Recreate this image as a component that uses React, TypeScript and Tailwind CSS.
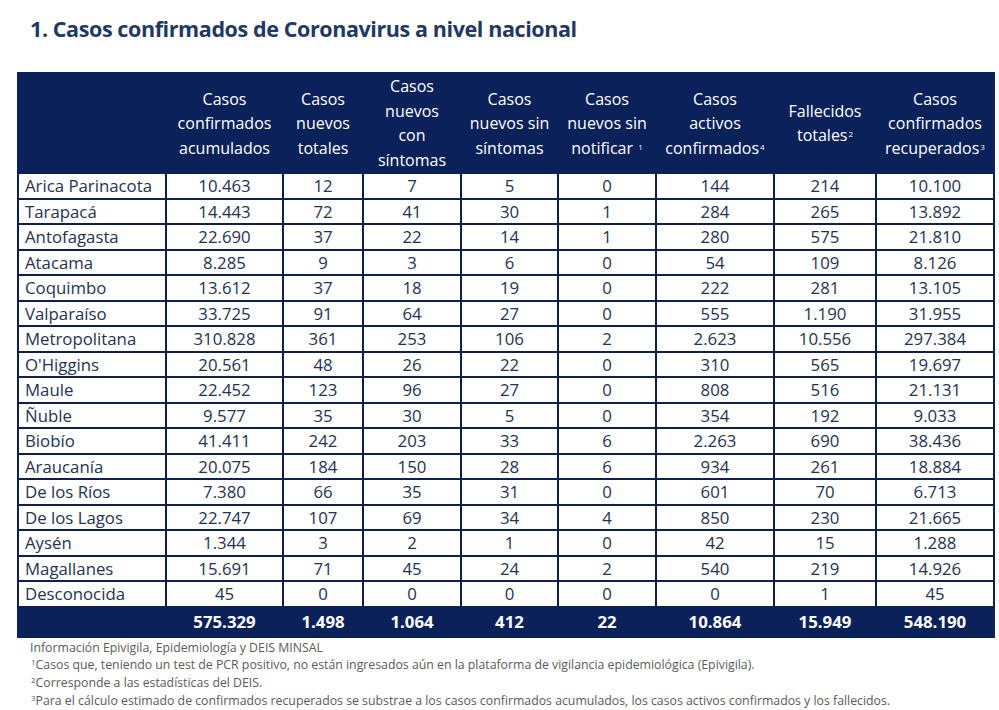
const headers: string[][] = [
  [],
  ['Casos', 'confirmados', 'acumulados'],
  ['Casos', 'nuevos', 'totales'],
  ['Casos', 'nuevos', 'con', 'síntomas'],
  ['Casos', 'nuevos sin', 'síntomas'],
  ['Casos', 'nuevos sin', 'notificar ¹'],
  ['Casos', 'activos', 'confirmados⁴'],
  ['Fallecidos', 'totales²'],
  ['Casos', 'confirmados', 'recuperados³'],
]

const widths = ['w-[148px]', 'w-[117px]', 'w-[80px]', 'w-[98px]', 'w-[97px]', 'w-[98px]', 'w-[118px]', 'w-[102px]', 'w-[118px]']

const rows: string[][] = [
  ['Arica Parinacota', '10.463', '12', '7', '5', '0', '144', '214', '10.100'],
  ['Tarapacá', '14.443', '72', '41', '30', '1', '284', '265', '13.892'],
  ['Antofagasta', '22.690', '37', '22', '14', '1', '280', '575', '21.810'],
  ['Atacama', '8.285', '9', '3', '6', '0', '54', '109', '8.126'],
  ['Coquimbo', '13.612', '37', '18', '19', '0', '222', '281', '13.105'],
  ['Valparaíso', '33.725', '91', '64', '27', '0', '555', '1.190', '31.955'],
  ['Metropolitana', '310.828', '361', '253', '106', '2', '2.623', '10.556', '297.384'],
  ["O'Higgins", '20.561', '48', '26', '22', '0', '310', '565', '19.697'],
  ['Maule', '22.452', '123', '96', '27', '0', '808', '516', '21.131'],
  ['Ñuble', '9.577', '35', '30', '5', '0', '354', '192', '9.033'],
  ['Biobío', '41.411', '242', '203', '33', '6', '2.263', '690', '38.436'],
  ['Araucanía', '20.075', '184', '150', '28', '6', '934', '261', '18.884'],
  ['De los Ríos', '7.380', '66', '35', '31', '0', '601', '70', '6.713'],
  ['De los Lagos', '22.747', '107', '69', '34', '4', '850', '230', '21.665'],
  ['Aysén', '1.344', '3', '2', '1', '0', '42', '15', '1.288'],
  ['Magallanes', '15.691', '71', '45', '24', '2', '540', '219', '14.926'],
  ['Desconocida', '45', '0', '0', '0', '0', '0', '1', '45'],
]

const totals = ['', '575.329', '1.498', '1.064', '412', '22', '10.864', '15.949', '548.190']

const supMap: Record<string, string> = { '¹': '1', '²': '2', '³': '3', '⁴': '4' }

function Sup({ n }: { n: string }) {
  return <span className="relative -top-[4px] ml-[1px] text-[8px] leading-none">{n}</span>
}

function HeaderLine({ text }: { text: string }) {
  const last = text.slice(-1)
  if (!supMap[last]) return <span className="block">{text}</span>
  return <span className="block">{text.slice(0, -1)}<Sup n={supMap[last]} /></span>
}

export default function App() {
  return <div className="min-h-[710px] w-[999px] bg-white font-['Open_Sans',sans-serif]">
    <h1 className="pl-[30px] pt-[13px] text-[21.5px] font-bold tracking-[-0.4px] text-[#1f3864]">1. Casos confirmados de Coronavirus a nivel nacional</h1>
    <table className="ml-[17px] mt-[27px] border-collapse text-[16.8px] text-[#253250]">
      <thead>
        <tr className="h-[98px] bg-[#0a215a] text-white">
          {headers.map((lines, index) =>
            <th key={index} className={`${widths[index]} border-2 border-[#0a215a] px-[2px] text-center text-[16px] font-normal leading-[24.5px]`}>
              {lines.map(line => <HeaderLine key={line} text={line} />)}
            </th>
          )}
        </tr>
      </thead>
      <tbody>
        {rows.map(row =>
          <tr key={row[0]} className="h-[25.5px]">
            {row.map((cell, index) =>
              <td key={index} className={`border-2 border-[#0f2148] p-0 leading-[20px] ${index === 0 ? 'pl-[6px] text-left' : 'text-center'}`}>{cell}</td>
            )}
          </tr>
        )}
        <tr className="h-[30px] bg-[#0a215a] text-white">
          {totals.map((cell, index) =>
            <td key={index} className="border-2 border-[#0a215a] p-0 text-center font-bold">{cell}</td>
          )}
        </tr>
      </tbody>
    </table>
    <div className="pl-[30px] pt-[1px] text-[12.3px] leading-[17.7px] text-[#5b5b5b]">
      <p>Información Epivigila, Epidemiología y DEIS MINSAL</p>
      <p><Sup n="1" />Casos que, teniendo un test de PCR positivo, no están ingresados aún en la plataforma de vigilancia epidemiológica (Epivigila).</p>
      <p><Sup n="2" />Corresponde a las estadísticas del DEIS.</p>
      <p><Sup n="3" />Para el cálculo estimado de confirmados recuperados se substrae a los casos confirmados acumulados, los casos activos confirmados y los fallecidos.</p>
    </div>
  </div>
}
